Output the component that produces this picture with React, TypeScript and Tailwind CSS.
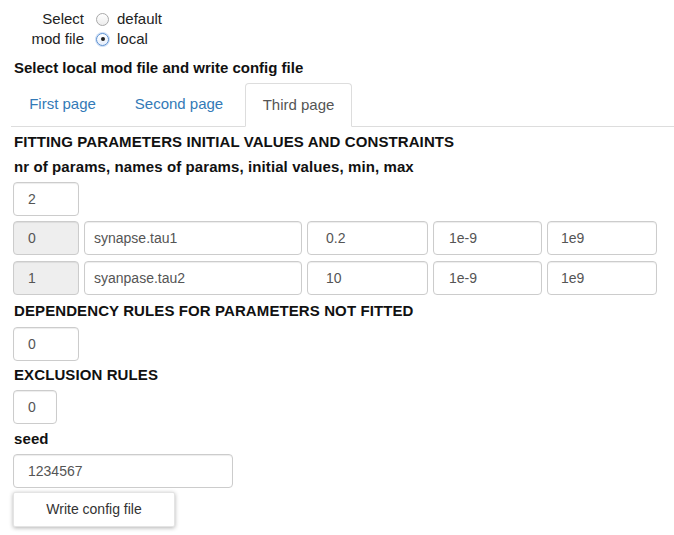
import React from 'react';

const font = { fontFamily: '"Liberation Sans", Arial, sans-serif' };

const Radio = ({ checked, label }: { checked?: boolean; label: string }) => (
  <div className="flex items-center h-[20px]">
    <span
      className={`w-[13px] h-[13px] rounded-full flex items-center justify-center ${
        checked
          ? 'border border-[#5a8fd0] bg-gradient-to-b from-white to-[#e6eefa] shadow-[0_0_0_1px_rgba(110,160,230,0.35)]'
          : 'border border-[#a9a9a9] bg-gradient-to-b from-white to-[#ececec]'
      }`}
    >
      {checked && <span className="w-[4px] h-[4px] rounded-full bg-[#222]" />}
    </span>
    <span className="ml-[8px] text-[15px] text-[#222]">{label}</span>
  </div>
);

const Field = ({
  value,
  w,
  pl = 'pl-[14px]',
  gray,
}: {
  value: string;
  w: string;
  pl?: string;
  gray?: boolean;
}) => (
  <div
    className={`${w} ${pl} h-[34px] flex items-center rounded-[4px] border border-[#ccc] shadow-[inset_0_1px_1px_rgba(0,0,0,0.075)] text-[14px] text-[#555] ${
      gray ? 'bg-[#eee]' : 'bg-white'
    }`}
  >
    {value}
  </div>
);

const Heading = ({ children, cls = '' }: { children: React.ReactNode; cls?: string }) => (
  <div className={`ml-[14px] text-[15px] font-bold leading-[20px] tracking-[0.1px] text-[#111] ${cls}`}>{children}</div>
);

const rows = [
  ['0', 'synapse.tau1', '0.2', '1e-9', '1e9'],
  ['1', 'syanpase.tau2', '10', '1e-9', '1e9'],
];

export default function App() {
  return (
    <div className="w-[674px] h-[535px] bg-white overflow-hidden" style={font}>
      <div className="flex pt-[9px]">
        <div className="w-[84px] text-right text-[15px] leading-[20px] text-[#222]">
          <div>Select</div>
          <div>mod file</div>
        </div>
        <div className="ml-[12px]">
          <Radio label="default" />
          <Radio checked label="local" />
        </div>
      </div>

      <div className="mt-[9px] ml-[14px] text-[15px] font-bold leading-[20px] text-[#111]">
        Select local mod file and write config file
      </div>

      <div className="mt-[5px] ml-[11px] pl-[1px] flex gap-[4px] border-b border-[#ddd] text-[15px]">
        <div className="w-[101px] h-[43px] flex items-center justify-center text-[#337ab7]">First page</div>
        <div className="w-[124px] h-[43px] flex items-center justify-center text-[#337ab7]">Second page</div>
        <div className="w-[107px] h-[44px] -mb-px flex items-center justify-center text-[#555] bg-white border border-[#ddd] border-b-white rounded-t-[4px]">
          Third page
        </div>
      </div>

      <Heading cls="mt-[5px]">FITTING PARAMETERS INITIAL VALUES AND CONSTRAINTS</Heading>
      <Heading cls="mt-[5px]">nr of params, names of params, initial values, min, max</Heading>

      <div className="ml-[13px] mt-[5px]">
        <Field value="2" w="w-[66px]" />
        {rows.map((r, i) => (
          <div key={i} className={`flex gap-[5px] ${i === 0 ? 'mt-[5px]' : 'mt-[6px]'}`}>
            <Field value={r[0]} w="w-[66px]" gray />
            <Field value={r[1]} w="w-[218px]" pl="pl-[9px]" />
            <Field value={r[2]} w="w-[121px]" pl="pl-[18px]" />
            <Field value={r[3]} w="w-[109px]" pl="pl-[15px]" />
            <Field value={r[4]} w="w-[110px]" pl="pl-[13px]" />
          </div>
        ))}
      </div>

      <Heading cls="mt-[6px]">DEPENDENCY RULES FOR PARAMETERS NOT FITTED</Heading>
      <div className="ml-[13px] mt-[6px]">
        <Field value="0" w="w-[66px]" />
      </div>

      <Heading cls="mt-[4px]">EXCLUSION RULES</Heading>
      <div className="ml-[13px] mt-[5px]">
        <Field value="0" w="w-[44px]" />
      </div>

      <Heading cls="mt-[5px]">seed</Heading>
      <div className="ml-[13px] mt-[5px]">
        <Field value="1234567" w="w-[220px]" />
      </div>

      <button className="ml-[13px] mt-[4px] w-[162px] h-[35px] bg-white rounded-[2px] border border-[#e4e4e4] shadow-[0_1px_4px_rgba(0,0,0,0.3)] text-[14px] text-[#333]">
        Write config file
      </button>
    </div>
  );
}
